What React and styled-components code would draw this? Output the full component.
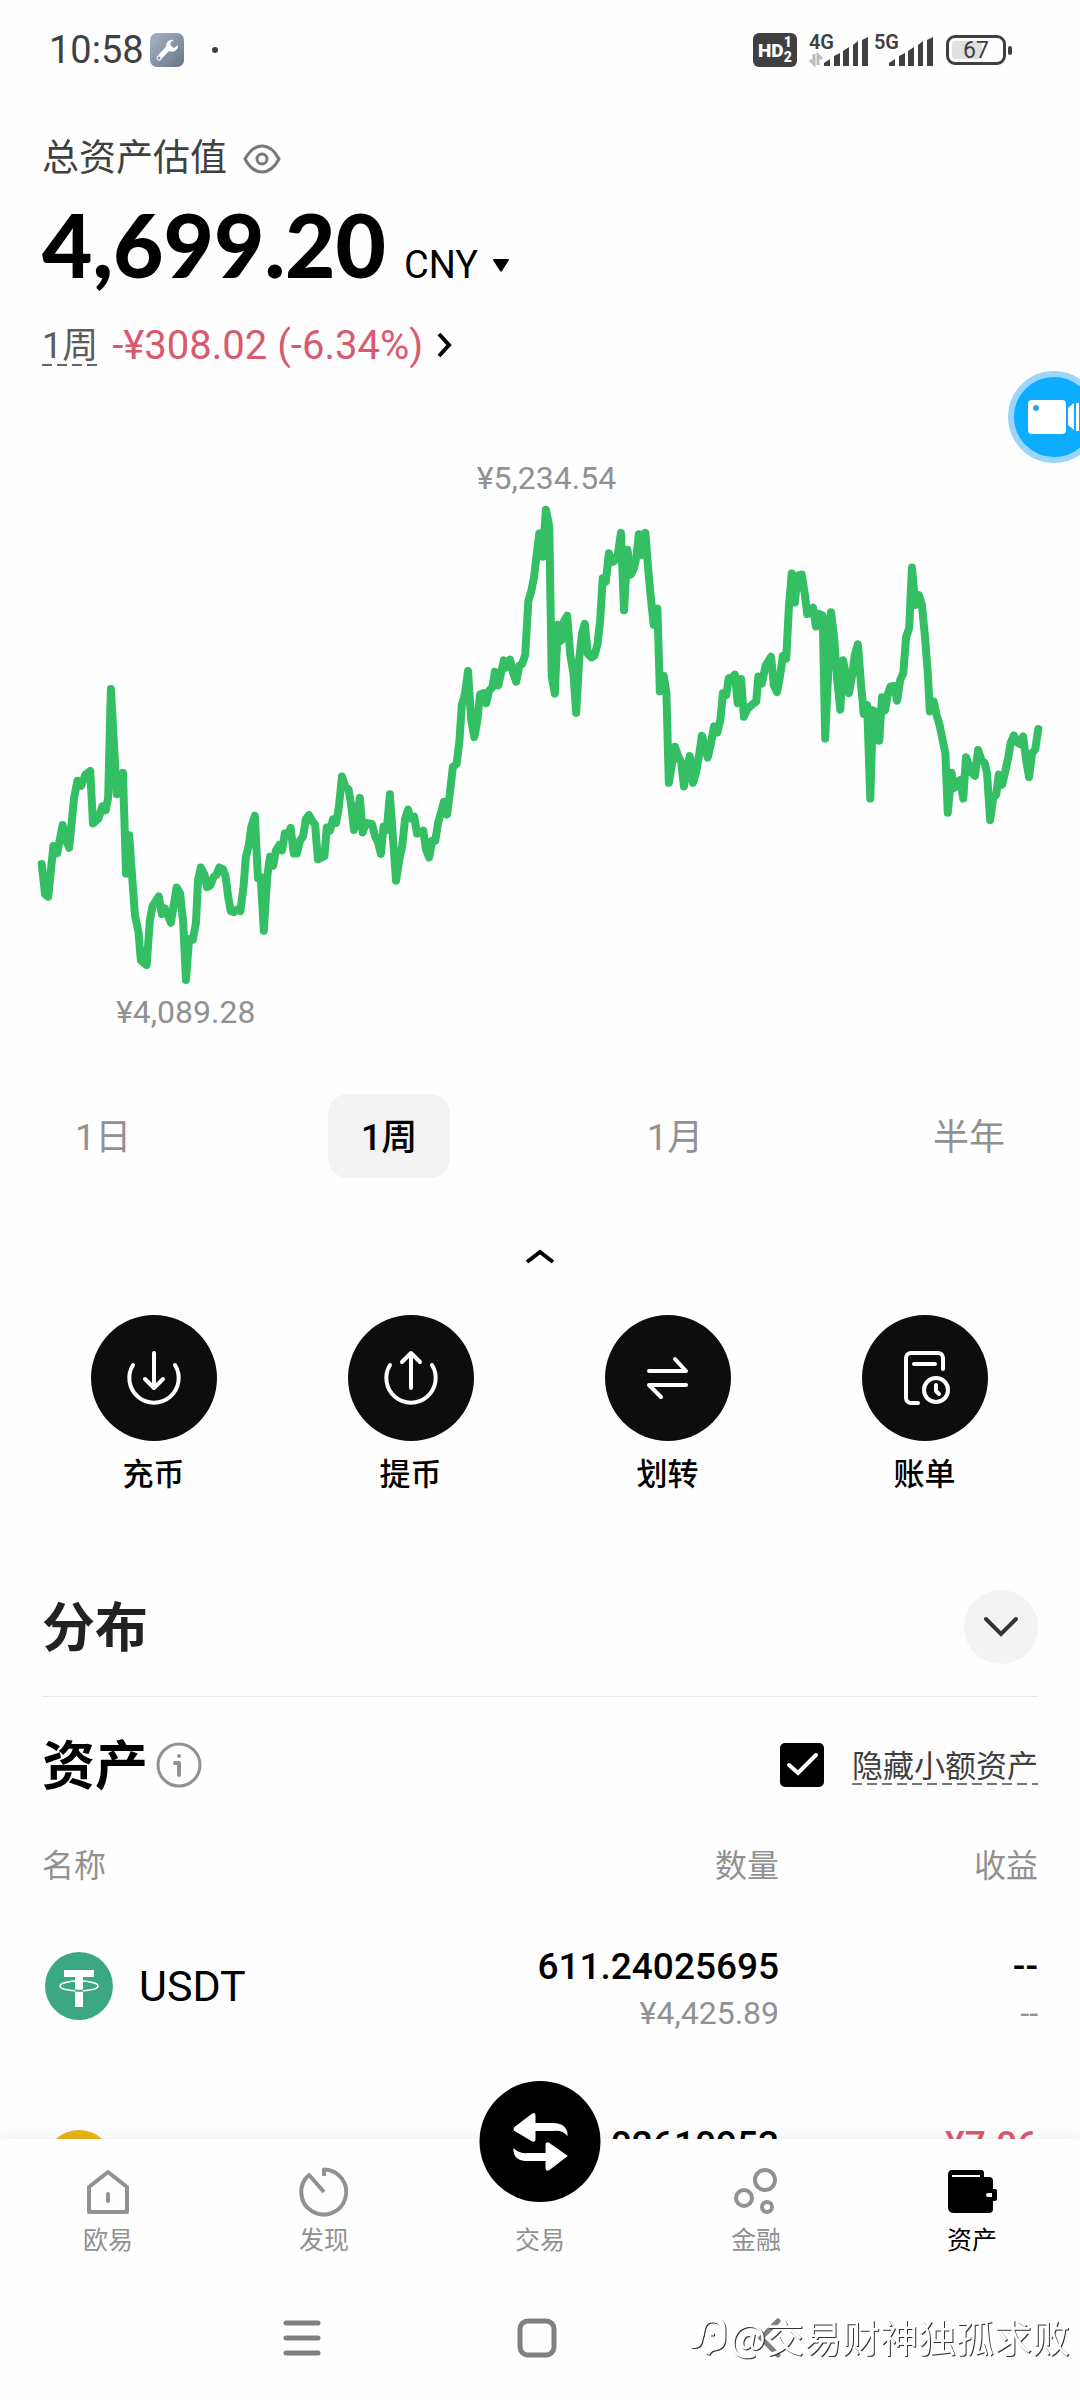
import React, {useState} from 'react';
import styled, {createGlobalStyle} from 'styled-components';

// chart samples, 12 per line: x, y on a 3136 x 1568 grid
const samples = [
    121,1075, 131,1160, 140,1167, 155,1025, 166,1045, 182,966, 192,1010, 201,1030, 215,890, 225,842, 236,856, 248,825,
    262,815, 270,962, 286,948, 297,914, 307,925, 314,890, 322,585, 339,880, 348,850, 357,820, 366,1102, 375,995,
    392,1220, 402,1265, 409,1345, 426,1358, 435,1235, 443,1193, 461,1166, 470,1215, 479,1200, 496,1240, 513,1141, 523,1158,
    532,1240, 540,1400, 549,1285, 560,1287, 569,1240, 575,1120, 583,1085, 594,1105, 601,1140, 611,1135, 620,1112, 629,1105,
    637,1085, 648,1090, 655,1110, 663,1170, 670,1207, 680,1210, 688,1203, 698,1207, 707,1140, 714,1055, 722,1025, 730,970,
    740,940, 749,1115, 757,1112, 766,1262, 776,1110, 784,1055, 793,1080, 801,1038, 811,1022, 819,1037, 827,990, 836,995,
    844,974, 853,1046, 862,1046, 871,1010, 880,998, 888,950, 897,938, 907,955, 915,965, 923,1062, 942,1053, 949,973,
    958,982, 967,950, 976,960, 984,915, 993,830, 1003,860, 1012,866, 1019,905, 1028,980, 1036,950, 1045,890, 1053,987,
    1063,960, 1080,963, 1090,1000, 1098,1015, 1106,1047, 1114,970, 1123,980, 1132,880, 1150,1122, 1160,1060, 1168,1025, 1176,950,
    1185,923, 1193,948, 1203,943, 1211,990, 1229,982, 1237,1035, 1246,1057, 1255,1010, 1264,1010, 1272,960, 1281,930, 1289,901,
    1298,937, 1306,880, 1315,803, 1326,795, 1334,730, 1341,630, 1350,600, 1359,535, 1368,670, 1377,720, 1386,675, 1394,600,
    1403,597, 1412,625, 1420,590, 1430,580, 1437,537, 1447,575, 1463,505, 1471,525, 1481,503, 1490,540, 1499,565, 1508,520,
    1516,515, 1525,490, 1534,340, 1543,310, 1551,270, 1560,195, 1566,150, 1576,215, 1585,83, 1595,130, 1602,550, 1611,598,
    1620,405, 1630,450, 1638,395, 1647,380, 1656,490, 1665,540, 1673,652, 1682,500, 1690,430, 1698,403, 1707,487, 1717,497,
    1726,492, 1735,460, 1743,390, 1750,275, 1759,285, 1768,205, 1778,230, 1786,225, 1793,215, 1803,148, 1812,365, 1822,195,
    1831,265, 1840,250, 1848,215, 1855,152, 1864,210, 1874,148, 1883,260, 1891,340, 1898,405, 1909,360, 1916,592, 1927,548,
    1935,595, 1942,848, 1960,747, 1968,770, 1978,790, 1986,858, 1994,810, 2003,773, 2012,848, 2021,820, 2030,770, 2038,716,
    2047,745, 2055,777, 2064,740, 2073,690, 2083,707, 2092,670, 2099,597, 2109,602, 2116,555, 2126,553, 2134,545, 2142,625,
    2152,557, 2160,663, 2171,640, 2186,627, 2196,620, 2202,550, 2212,570, 2223,520, 2239,495, 2247,575, 2256,594, 2265,550,
    2273,493, 2283,500, 2291,350, 2299,262, 2308,343, 2316,267, 2328,265, 2337,320, 2344,375, 2355,373, 2361,357, 2369,410,
    2378,375, 2389,380, 2396,724, 2413,370, 2422,440, 2431,560, 2440,643, 2448,505, 2457,550, 2465,597, 2474,550, 2482,490,
    2491,460, 2500,570, 2508,655, 2518,630, 2527,892, 2535,645, 2544,650, 2553,730, 2561,608, 2570,645, 2578,600, 2586,578,
    2596,577, 2605,618, 2614,560, 2623,540, 2631,440, 2640,415, 2648,245, 2658,350, 2668,322, 2677,350, 2686,440, 2694,540,
    2700,648, 2711,620, 2720,660, 2728,685, 2745,765, 2752,932, 2763,820, 2771,862, 2780,845, 2788,840, 2797,892, 2805,776,
    2814,800, 2822,820, 2831,828, 2840,756, 2850,785, 2859,792, 2866,820, 2875,952, 2884,890, 2893,880, 2900,825, 2910,853,
    2919,815, 2928,775, 2935,735, 2944,715, 2954,735, 2963,740, 2971,718, 2979,780, 2988,832, 2997,765, 3006,755, 3015,697
];

const periods = ['1日', '1周', '1月', '半年'];

const actions = [
    {
        label: '充币',
        icon: <><path d="M6 14a24.700 24.700 0 1 0 42 0" /><path d="M27 2v34M18 28l9 9 9-9" /></>
    },
    {
        label: '提币',
        icon: <><path d="M6 14a24.700 24.700 0 1 0 42 0" /><path d="M27 37V3M18 11l9-9 9 9" /></>
    },
    {
        label: '划转',
        icon: <><path d="M8 20h37L34 8" /><path d="M45 34H8l12 12" /></>
    },
    {
        label: '账单',
        icon: <>
            <path d="M45 18V7a5 5 0 0 0-5-5H13a5 5 0 0 0-5 5v40a5 5 0 0 0 5 5h7" />
            <path d="M16 13h21" />
            <circle cx="38" cy="39" r="12" />
            <path d="M38 34v6l3 3" />
        </>
    }
];

const assets = [
    {name: 'USDT', color: '#3ba883', amount: '611.24025695', worth: '¥4,425.89', pnl: '--', pnlRate: '--'},
    {name: 'BNB', color: '#eab414', amount: '0.02610953', worth: '¥94.78', pnl: '¥7.06', pnlRate: '8.05%', loss: true}
];

const tabs = [
    {label: '欧易', icon: <><path d="M5 19 24 4l19 15v25H5z" /><path d="M24 26v7" strokeLinecap="round" /></>},
    {label: '发现', icon: <path d="M24 8V1.500A22.500 22.500 0 1 1 9 7L24 24" />},
    {label: '交易'},
    {
        label: '金融',
        icon: <><circle cx="33" cy="12" r="10" /><circle cx="12" cy="30" r="8" /><circle cx="35" cy="39" r="5" /></>
    },
    {label: '资产', wallet: true}
];

function SignalBars() {
    return (
        <Bars width="44" height="30" viewBox="0 0 44 30">
            <path d="M0 29v-3l6-4v7zM10 29V19l6-3v13zM19 29V14l6-4v19zM29 29V8l5-4v25zM38 29V3l6-3v29z" />
        </Bars>
    );
}

function StatusBar() {
    return (
        <Status>
            <Clock>10:58</Clock>
            <svg width="34" height="34" viewBox="0 0 34 34">
                <defs>
                    <linearGradient id="tool" x1="0" y1="0" x2="1" y2="1">
                        <stop offset="0" stopColor="#a9b5c4" />
                        <stop offset="1" stopColor="#667587" />
                    </linearGradient>
                </defs>
                <rect width="34" height="34" rx="7" fill="url(#tool)" />
                <path d="M9 25 19 14" stroke="#fff" strokeWidth="5" strokeLinecap="round" />
                <path d="M24 7a6 6 0 1 0 4 5l-4 3-4-3 1-3z" fill="#fff" />
                <circle cx="9" cy="25" r="1.5" fill="#8593a5" />
            </svg>
            <Dot />
            <HdBadge>HD<span>1<br />2</span></HdBadge>
            <Network>
                <NetworkType>
                    4G
                    <svg width="14" height="11" viewBox="0 0 14 11" fill="none" stroke="#bbb" strokeWidth="3">
                        <path d="M5 0v10L1 6M9 11V1l4 4" />
                    </svg>
                </NetworkType>
                <SignalBars />
            </Network>
            <Network>
                <NetworkType>5G</NetworkType>
                <SignalBars />
            </Network>
            <Battery>67</Battery>
        </Status>
    );
}

function Chart() {
    return (
        <ChartBox>
            <PriceLabel $left="50.6%">¥5,234.54</PriceLabel>
            <svg viewBox="0 0 3136 1568" preserveAspectRatio="none">
                <polyline
                    points={samples.join(' ')}
                    fill="none"
                    stroke="#35bf64"
                    strokeWidth="8"
                    strokeLinecap="round"
                    strokeLinejoin="round"
                    vectorEffect="non-scaling-stroke"
                />
            </svg>
            <PriceLabel $left="17.2%" $low>¥4,089.28</PriceLabel>
        </ChartBox>
    );
}

function CoinIcon({color, name}) {
    return (
        <svg width="68" height="68" viewBox="0 0 68 68">
            <circle cx="34" cy="34" r="34" fill={color} />
            {name === 'USDT' && <>
                <path d="M19 18h30v7h-11v30h-8V25H19z" fill="#fff" />
                <ellipse cx="34" cy="34" rx="19" ry="5" fill="none" stroke="#fff" strokeWidth="1.5" />
                <path d="M30 37.500q4 .5 8 0v2q-4 .5-8 0z" fill={color} />
            </>}
        </svg>
    );
}

function AssetTable() {
    return (
        <Table>
            <thead>
                <tr>
                    <th>名称</th>
                    <th>数量</th>
                    <th>收益</th>
                </tr>
            </thead>
            <tbody>
                {assets.map((asset) => (
                    <tr key={asset.name}>
                        <td>
                            <Coin>
                                <CoinIcon color={asset.color} name={asset.name} />
                                {asset.name}
                            </Coin>
                        </td>
                        <td>
                            <Amount>{asset.amount}</Amount>
                            <Worth>{asset.worth}</Worth>
                        </td>
                        <td>
                            <Amount $loss={asset.loss}>{asset.pnl}</Amount>
                            <Worth>{asset.pnlRate}</Worth>
                        </td>
                    </tr>
                ))}
            </tbody>
        </Table>
    );
}

function TabBar() {
    return (
        <Tabs>
            {tabs.map((tab) => (
                <Tab key={tab.label} href="#" $active={tab.wallet}>
                    {tab.icon && (
                        <TabIcon viewBox="0 0 48 48">{tab.icon}</TabIcon>
                    )}
                    {tab.wallet && (
                        <svg width="48" height="48" viewBox="0 0 48 48">
                            <path
                                fillRule="evenodd"
                                d="M4 0h29q3 0 3 3v4h5q4 0 4 4v8h2q2 0 2 2v8q0 2-2 2h-2v8q0 4-4 4H6q-6 0-6-6V5q0-5 4-5zM4 5v2h28V5zM38 25q0 2 2 2h4v-4h-4q-2 0-2 2z"
                                transform="translate(0 2)"
                            />
                        </svg>
                    )}
                    {!tab.icon && !tab.wallet && (
                        <>
                            <TradeSpace />
                            <TradeButton>
                                <svg width="56" height="58" viewBox="0 0 56 58" fill="#fff">
                                    <path d="M2 14 19 1q4-3 4 2v7h15q15-1 17 10v3q-5-6-14-5H23v8q0 4-4 2L2 18q-2-2 0-4z" />
                                    <path d="M54 44 37 57q-4 2-4-2v-7H18Q2 49 1 38v-3q5 6 14 5h18v-8q0-4 4-2l17 12q2 1 0 2z" />
                                </svg>
                            </TradeButton>
                        </>
                    )}
                    {tab.label}
                </Tab>
            ))}
        </Tabs>
    );
}

function App() {
    const [period, setPeriod] = useState('1周');
    const [hideSmall, setHideSmall] = useState(true);

    return (
        <Screen>
            <GlobalStyle />
            <StatusBar />
            <Content>
                <Summary>
                    <SummaryLabel>
                        总资产估值
                        <IconButton aria-label="eye">
                            <svg width="38" height="30" viewBox="0 0 38 30" fill="none" stroke="#777" strokeWidth="3">
                                <path d="M2 15Q9 2 19 2t17 13q-7 13-17 13T2 15z" strokeLinejoin="round" />
                                <circle cx="19" cy="15" r="5" />
                            </svg>
                        </IconButton>
                    </SummaryLabel>
                    <Total>
                        4,699.20
                        <Currency>
                            CNY
                            <svg width="16" height="13" viewBox="0 0 16 13">
                                <path d="M1 0h14q1 0 1 1L9 12q-1 1-2 0L0 1q0-1 1-1z" />
                            </svg>
                        </Currency>
                    </Total>
                    <Change>
                        <Dashed>1周</Dashed>
                        <span>-¥308.02 (-6.34%)</span>
                        <svg width="16" height="26" viewBox="0 0 16 26" fill="none" stroke="#000" strokeWidth="4">
                            <path d="m2 2 10 11L2 24" />
                        </svg>
                    </Change>
                </Summary>

                <Chart />

                <Periods>
                    {periods.map((item) => (
                        <Period key={item} $active={item === period} onClick={() => setPeriod(item)}>
                            {item}
                        </Period>
                    ))}
                </Periods>

                <Collapse aria-label="collapse">
                    <svg width="28" height="14" viewBox="0 0 28 14" fill="none" stroke="#000" strokeWidth="4">
                        <path d="M1 12 14 2l13 10" />
                    </svg>
                </Collapse>

                <Actions>
                    {actions.map((action) => (
                        <Action key={action.label}>
                            <ActionCircle>
                                <svg width="54" height="54" viewBox="0 0 54 54">{action.icon}</svg>
                            </ActionCircle>
                            {action.label}
                        </Action>
                    ))}
                </Actions>

                <Distribution>
                    <Heading $soft>分布</Heading>
                    <RoundButton aria-label="expand">
                        <svg width="36" height="20" viewBox="0 0 36 20" fill="none" stroke="#333" strokeWidth="4" strokeLinecap="round">
                            <path d="m3 2 15 15L33 2" />
                        </svg>
                    </RoundButton>
                </Distribution>

                <AssetHeader>
                    <Heading>资产</Heading>
                    <svg width="46" height="46" viewBox="0 0 46 46" fill="none" stroke="#919191" strokeWidth="3">
                        <circle cx="23" cy="23" r="21" />
                        <path d="M19 21h4v12" strokeWidth="4" strokeLinecap="round" strokeLinejoin="round" />
                        <circle cx="23" cy="14" r="2" fill="#919191" stroke="none" />
                    </svg>
                    <CheckBox>
                        <input
                            id="hide-small"
                            type="checkbox"
                            checked={hideSmall}
                            onChange={(e) => setHideSmall(e.target.checked)}
                        />
                        {hideSmall && (
                            <svg width="44" height="44" viewBox="0 0 44 44">
                                <path d="m9 22 9 8 18-18" />
                            </svg>
                        )}
                    </CheckBox>
                    <HideLabel htmlFor="hide-small">隐藏小额资产</HideLabel>
                </AssetHeader>

                <AssetTable />
            </Content>

            <TabBar />

            <SystemNav>
                <svg viewBox="0 0 38 38"><path d="M3 4h32M3 19h32M3 34h32" strokeLinecap="round" /></svg>
                <svg viewBox="0 0 38 38"><rect x="2" y="2" width="34" height="34" rx="8" /></svg>
                <svg viewBox="0 0 38 38"><path d="M25 2 8 19l17 17" strokeLinecap="round" /></svg>
            </SystemNav>

            <RecordButton aria-label="record">
                <svg width="52" height="34" viewBox="0 0 52 34" fill="#fff">
                    <rect width="38" height="34" rx="4" />
                    <circle cx="8" cy="8" r="3" fill="#29a5e8" />
                    <path d="M40 8 46 3v27l-6-5zM48 3h3v28h-3z" />
                </svg>
            </RecordButton>

            <Watermark>
                <svg width="40" height="44" viewBox="0 0 40 44" fill="none" stroke="#fff" strokeWidth="5">
                    <path d="M3 31q8 2 9-5l3-13q2-7 10-7 10 0 10 9v9q0 9-9 10-5 1-7 6" />
                    <path d="M10 20h6M22 20h4" strokeWidth="3" />
                </svg>
                @交易财神独孤求败
            </Watermark>
        </Screen>
    );
}

const GlobalStyle = createGlobalStyle`
* {
    box-sizing: border-box;
}

body {
    margin: 0;
    background: #fefefe;
    color: #000;
    font-family: Roboto, "Noto Sans CJK SC", sans-serif;
}

button {
    border: 0;
    padding: 0;
    background: none;
    color: inherit;
    font: inherit;
}

svg {
    flex: none;
    overflow: visible;
}
`;

const Screen = styled.div`
position: relative;
display: flex;
flex-direction: column;
height: 100vh;
overflow: hidden;
`;

const Status = styled.header`
flex: none;
display: flex;
align-items: center;
height: 100px;
padding: 0 74px 0 49px;
color: #404040;
`;

const Clock = styled.span`
font-size: 38px;
line-height: 44px;
margin-right: 6px;
`;

const Dot = styled.span`
width: 6px;
height: 6px;
margin: 0 auto 0 28px;
border-radius: 50%;
background: #404040;
`;

const HdBadge = styled.span`
display: flex;
align-items: center;
justify-content: center;
width: 44px;
height: 34px;
margin-right: 12px;
border-radius: 6px;
background: #404040;
color: #fff;
font-size: 19px;
font-weight: 900;

span {
    font-size: 14px;
    line-height: 15px;
}
`;

const Network = styled.span`
display: flex;
align-items: flex-end;
height: 34px;
margin-right: 6px;
`;

const NetworkType = styled.span`
display: flex;
flex-direction: column;
align-items: flex-start;
align-self: flex-start;
margin-right: -10px;
font-size: 20px;
font-weight: 600;
line-height: 18px;

svg {
    margin-top: 3px;
}
`;

const Bars = styled.svg`
fill: #404040;
`;

const Battery = styled.span`
position: relative;
width: 60px;
height: 30px;
margin-left: 7px;
border: 3px solid #404040;
border-radius: 9px;
background: linear-gradient(90deg, #e0e0e0 62%, transparent 62%) content-box;
padding: 3px;
font-size: 23px;
line-height: 19px;
text-align: center;

&::after {
    content: '';
    position: absolute;
    right: -9px;
    top: 8px;
    width: 4px;
    height: 9px;
    border-radius: 2px;
    background: #404040;
}
`;

const Content = styled.main`
flex: 1;
min-height: 0;
overflow-y: auto;
scrollbar-width: none;
`;

const Summary = styled.section`
padding: 35px 42px 0;
`;

const SummaryLabel = styled.div`
display: flex;
align-items: center;
gap: 16px;
color: #404040;
font-size: 37px;
line-height: 48px;
`;

const IconButton = styled.button`
display: flex;
`;

const Total = styled.div`
display: flex;
align-items: baseline;
gap: 18px;
height: 138px;
font-family: Lato, "Noto Sans CJK SC", sans-serif;
font-size: 87px;
font-weight: 900;
line-height: 124px;
`;

const Currency = styled.button`
display: flex;
align-items: center;
gap: 15px;
font-family: Roboto, sans-serif;
font-size: 38px;
font-weight: 400;
line-height: 44px;
`;

const Change = styled.div`
display: flex;
align-items: center;
gap: 14px;
height: 48px;
color: #d9596f;
font-size: 40px;
`;

const Dashed = styled.span`
padding-top: 2px;
background: repeating-linear-gradient(90deg, #666 0 10px, transparent 10px 15px) bottom / 100% 2px no-repeat;
color: #5c5c5c;
font-size: 36px;
line-height: 40px;
`;

const ChartBox = styled.section`
position: relative;
margin-top: 111px;

> svg {
    display: block;
    width: 100%;
    height: 560px;
}
`;

const PriceLabel = styled.span`
position: absolute;
left: ${(props) => props.$left};
${(props) => props.$low ? 'bottom: 8px;' : 'top: -22px;'}
transform: translateX(-50%);
color: #919191;
font-size: 32px;
line-height: 40px;
`;

const Periods = styled.div`
display: flex;
justify-content: space-between;
padding: 54px 42px 0;
`;

const Period = styled.button`
height: 84px;
padding: 0 33px 4px;
border-radius: 20px;
background: ${(props) => props.$active ? '#f3f3f3' : 'transparent'};
color: ${(props) => props.$active ? '#000' : '#919191'};
font-size: 36px;
font-weight: ${(props) => props.$active ? 500 : 400};
`;

const Collapse = styled.button`
display: flex;
align-items: center;
justify-content: center;
width: 80px;
height: 40px;
margin: 59px auto 0;
`;

const Actions = styled.div`
display: flex;
padding: 38px 27px 0 25px;
`;

const Action = styled.button`
flex: 1;
display: flex;
flex-direction: column;
align-items: center;
gap: 14px;
font-size: 31px;
font-weight: 500;
line-height: 40px;
`;

const ActionCircle = styled.span`
display: flex;
align-items: center;
justify-content: center;
width: 126px;
height: 126px;
border-radius: 50%;
background: #0d0d0d;

svg {
    fill: none;
    stroke: #fff;
    stroke-width: 4;
    stroke-linecap: round;
    stroke-linejoin: round;
}
`;

const Distribution = styled.section`
display: flex;
align-items: center;
justify-content: space-between;
margin: 95px 42px 0;
padding-bottom: 32px;
border-bottom: 1px solid #e6e6e6;
`;

const Heading = styled.h2`
margin: 0;
padding-top: 4px;
color: ${(props) => props.$soft ? '#222' : '#000'};
font-size: 53px;
font-weight: 700;
line-height: 42px;
`;

const RoundButton = styled.button`
display: flex;
align-items: center;
justify-content: center;
width: 74px;
height: 74px;
border-radius: 50%;
background: #f3f3f3;
`;

const AssetHeader = styled.div`
display: flex;
align-items: center;
gap: 8px;
margin: 45px 42px 0;
`;

const CheckBox = styled.span`
position: relative;
display: flex;
margin-left: auto;
margin-right: 20px;

input {
    appearance: none;
    width: 44px;
    height: 44px;
    margin: 0;
    border: 2px solid #000;
    border-radius: 5px;
}

input:checked {
    background: #000;
}

svg {
    position: absolute;
    inset: 0;
    pointer-events: none;
    fill: none;
    stroke: #fff;
    stroke-width: 4;
    stroke-linecap: round;
}
`;

const HideLabel = styled.label`
padding-top: 4px;
background: repeating-linear-gradient(90deg, #777 0 10px, transparent 10px 15px) bottom / 100% 2px no-repeat;
color: #404040;
font-size: 31px;
line-height: 36px;
`;

const Table = styled.table`
width: calc(100% - 84px);
margin: 41px 42px 0;
border-collapse: collapse;
table-layout: fixed;

th {
    height: 68px;
    padding: 0;
    color: #919191;
    font-size: 32px;
    font-weight: 400;
    text-align: right;
}

th:first-child {
    width: 32%;
    text-align: left;
}

th:last-child {
    width: 26%;
}

td {
    height: 178px;
    padding: 8px 0 0;
    text-align: right;
}

td:first-child {
    padding: 0;
}
`;

const Coin = styled.div`
display: flex;
align-items: center;
gap: 26px;
padding-left: 3px;
font-size: 43px;
`;

const Amount = styled.div`
color: ${(props) => props.$loss ? '#d9596f' : '#000'};
font-size: 37px;
font-weight: 500;
line-height: 46px;
`;

const Worth = styled.div`
color: #919191;
font-size: 32px;
line-height: 46px;
`;

const Tabs = styled.nav`
position: relative;
z-index: 1;
flex: none;
display: flex;
height: 139px;
padding-top: 29px;
background: #fefefe;
box-shadow: 0 -4px 12px rgba(0, 0, 0, 0.05);
`;

const Tab = styled.a`
position: relative;
flex: 1;
display: flex;
flex-direction: column;
align-items: center;
gap: 9px;
color: ${(props) => props.$active ? '#000' : '#919191'};
font-size: 25px;
line-height: 32px;
text-decoration: none;
`;

const TabIcon = styled.svg`
width: 48px;
height: 48px;
fill: none;
stroke: #919191;
stroke-width: 4;
stroke-linejoin: round;
`;

const TradeSpace = styled.span`
height: 48px;
`;

const TradeButton = styled.span`
position: absolute;
top: -87px;
left: 50%;
transform: translateX(-50%);
display: flex;
align-items: center;
justify-content: center;
width: 121px;
height: 121px;
border-radius: 50%;
background: #000;
`;

const SystemNav = styled.footer`
position: relative;
z-index: 1;
flex: none;
display: flex;
align-items: center;
justify-content: center;
gap: 197px;
height: 122px;
padding: 0 6px 2px 0;
background: #fefefe;

svg {
    width: 38px;
    height: 38px;
    fill: none;
    stroke: #808080;
    stroke-width: 5;
}
`;

const RecordButton = styled.button`
position: absolute;
right: -20px;
top: 371px;
display: flex;
align-items: center;
width: 92px;
height: 92px;
padding-left: 14px;
border: 6px solid #9ad6fb;
border-radius: 50%;
background: #0cadff;
`;

const Watermark = styled.div`
position: absolute;
z-index: 2;
right: 10px;
bottom: 42px;
display: flex;
align-items: center;
gap: 2px;
color: #fff;
font-family: "Noto Sans CJK SC", sans-serif;
font-size: 38px;
line-height: 44px;
filter: drop-shadow(1px 1px 0 #333);
`;

export default App;
